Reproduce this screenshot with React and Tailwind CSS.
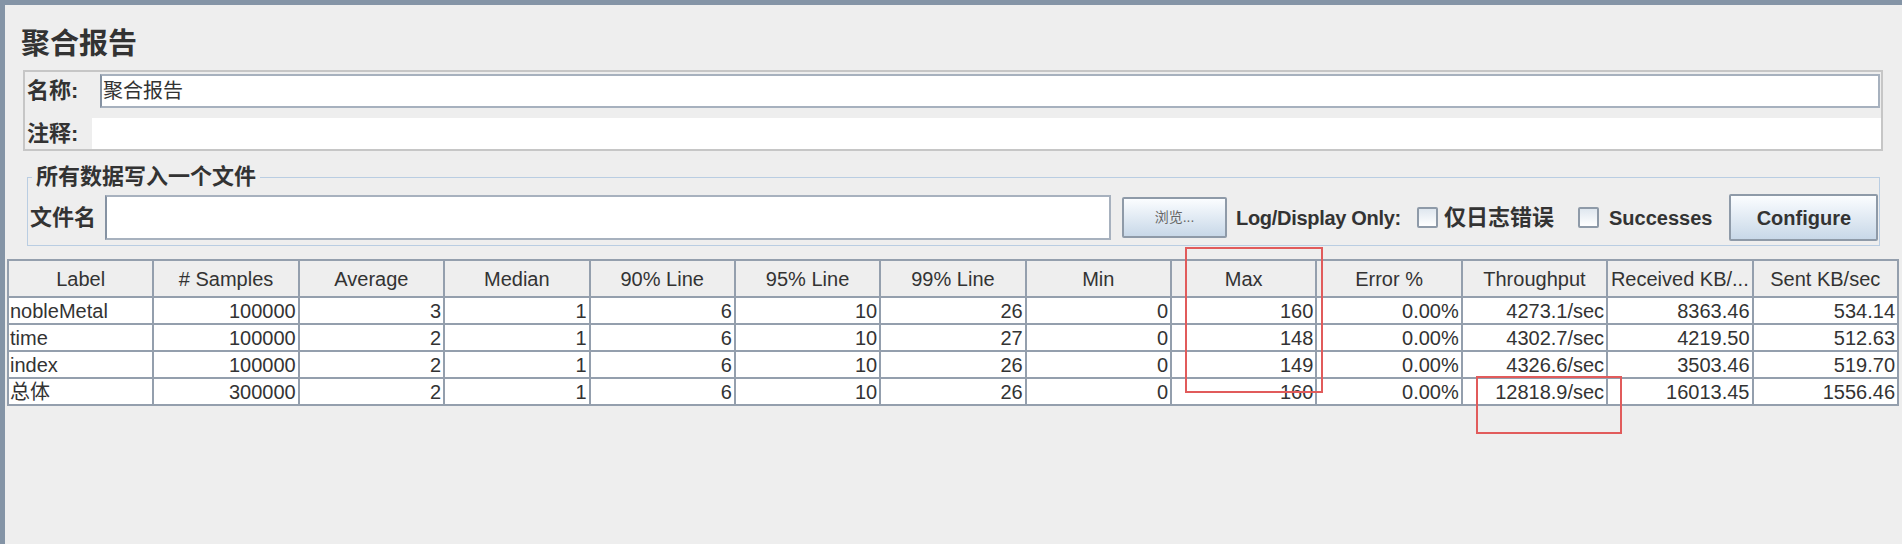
import React from 'react';

const COLUMNS = [
  'Label', '# Samples', 'Average', 'Median', '90% Line', '95% Line', '99% Line',
  'Min', 'Max', 'Error %', 'Throughput', 'Received KB/...', 'Sent KB/sec',
];

const ROWS = [
  ['nobleMetal', '100000', '3', '1', '6', '10', '26', '0', '160', '0.00%', '4273.1/sec', '8363.46', '534.14'],
  ['time', '100000', '2', '1', '6', '10', '27', '0', '148', '0.00%', '4302.7/sec', '4219.50', '512.63'],
  ['index', '100000', '2', '1', '6', '10', '26', '0', '149', '0.00%', '4326.6/sec', '3503.46', '519.70'],
  ['总体', '300000', '2', '1', '6', '10', '26', '0', '160', '0.00%', '12818.9/sec', '16013.45', '1556.46'],
];

const CheckBox = () => (
  <span className="inline-block w-[21px] h-[21px] border-2 border-[#8e9aa8] bg-gradient-to-b from-[#dfe7ef] to-[#ffffff] rounded-[2px]" />
);

const App = () => {
  return (
    <div className="relative w-[1902px] h-[544px] overflow-hidden bg-[#eeeeee] text-[#333333] font-['Liberation_Sans','Noto_Sans_CJK_SC',sans-serif]">
      <div className="h-full border-t-[5px] border-l-[5px] border-[#8494a6]">
        {/* 标题 */}
        <div className="pl-[16px] pt-[22px] h-[65px] text-[29px] leading-[34px] font-bold">聚合报告</div>

        {/* 名称 / 注释 */}
        <div className="ml-[18px] w-[1860px] h-[81px] border-2 border-[#c6c6c6] pt-[2px]">
          <div className="flex items-center h-[34px]">
            <span className="w-[75px] pl-[2px] text-[22px] font-bold leading-none">名称:</span>
            <div className="flex-1 mr-[1px] h-[34px] bg-white border-2 border-[#a7b1be] border-l-[#8592a2] flex items-center pl-[1px] text-[20px] leading-none">
              聚合报告
            </div>
          </div>
          <div className="flex items-center h-[31px] mt-[10px]">
            <span className="w-[67px] pl-[2px] text-[22px] font-bold leading-none">注释:</span>
            <div className="flex-1 h-[31px] bg-white" />
          </div>
        </div>

        {/* 所有数据写入一个文件 */}
        <fieldset className="ml-[22px] mt-[13px] w-[1853px] border border-[#b9cde2] pb-[4px]">
          <legend className="ml-[4px] px-[4px] text-[22px] font-bold leading-[26px]">所有数据写入一个文件</legend>
          <div className="flex items-center pt-[4px] pl-[2px]">
            <span className="text-[22px] font-bold leading-none">文件名</span>
            <div className="ml-[9px] w-[1006px] h-[45px] bg-white border-2 border-[#a7b1be] border-l-[#8592a2]" />
            <button className="ml-[11px] w-[105px] h-[41px] border-2 border-[#8e9aa8] rounded-[2px] bg-gradient-to-b from-[#fbfdff] to-[#c8d8e8] text-[14px] text-[#666666]">
              浏览...
            </button>
            <span className="ml-[9px] text-[20px] font-bold tracking-[-0.3px]">Log/Display Only:</span>
            <span className="ml-[16px] flex"><CheckBox /></span>
            <span className="ml-[6px] text-[22px] font-bold leading-none">仅日志错误</span>
            <span className="ml-[24px] flex"><CheckBox /></span>
            <span className="ml-[10px] text-[20px] font-bold">Successes</span>
            <button className="ml-[17px] w-[149px] h-[47px] border-2 border-[#8e9aa8] rounded-[2px] bg-gradient-to-b from-[#fbfdff] to-[#c8d8e8] text-[20px] font-bold text-[#333333]">
              Configure
            </button>
          </div>
        </fieldset>

        {/* 结果表格 */}
        <table className="mt-[13px] ml-[2px] w-[1892px] table-fixed border-collapse text-[20px]">
          <thead>
            <tr className="h-[37px] bg-[#eeeeee]">
              {COLUMNS.map((c) => (
                <th key={c} className="border-2 border-[#949fad] font-normal text-center whitespace-nowrap overflow-hidden px-[2px]">
                  {c}
                </th>
              ))}
            </tr>
          </thead>
          <tbody>
            {ROWS.map((row) => (
              <tr key={row[0]} className="h-[27px] bg-white">
                {row.map((v, i) => (
                  <td
                    key={i}
                    className={
                      i === 0
                        ? 'border-2 border-[#949fad] text-left pl-[1px] leading-none whitespace-nowrap'
                        : 'border-2 border-[#949fad] text-right pr-[2px] leading-none whitespace-nowrap'
                    }
                  >
                    {v}
                  </td>
                ))}
              </tr>
            ))}
          </tbody>
        </table>
      </div>

      {/* 红色标注框 */}
      <div className="absolute left-[1185px] top-[247px] w-[138px] h-[146px] border-2 border-[#e15b5b]" />
      <div className="absolute left-[1476px] top-[376px] w-[146px] h-[58px] border-2 border-[#e15b5b]" />
    </div>
  );
};

export default App;
